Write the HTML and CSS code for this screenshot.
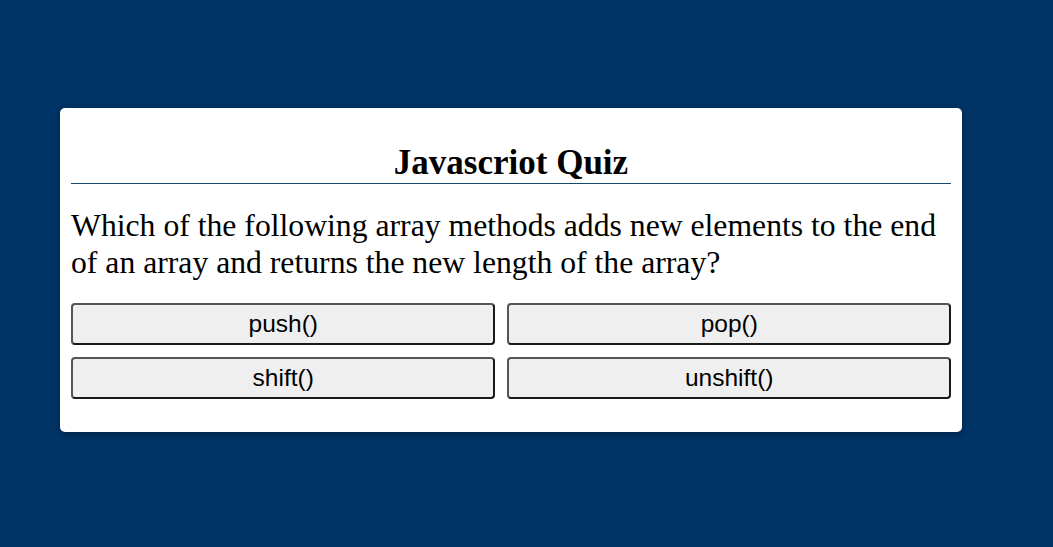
FILE: index.html
```html
<!DOCTYPE html>
<html>
<head>
<meta charset="utf-8">
<link rel="stylesheet" href="styles.css">
</head>
<body>
<div class="card">
  <h1 class="title">Javascriot Quiz</h1>
  <p class="question">Which of the following array methods adds new elements to the end of an array and returns the new length of the array?</p>
  <div class="answers">
    <button class="btn">push()</button>
    <button class="btn">pop()</button>
    <button class="btn">shift()</button>
    <button class="btn">unshift()</button>
  </div>
</div>
</body>
</html>
```

FILE: styles.css
```css
html, body {
  margin: 0;
  padding: 0;
  background: #003366;
  height: 100%;
}
body {
  font-family: "Liberation Serif", "Times New Roman", serif;
  padding-top: 108px;
  padding-left: 60px;
  box-sizing: border-box;
}
.card {
  width: 902px;
  height: 324px;
  box-sizing: border-box;
  background: #fff;
  border-radius: 5px;
  padding: 10px 11px;
  box-shadow: 0 2px 6px rgba(0,0,0,0.3);
}
.title {
  font-size: 35px;
  font-weight: bold;
  text-align: center;
  margin: 25px 0 0;
  line-height: 40px;
  padding-bottom: 0;
  border-bottom: 1px solid #16496b;
  color: #000;
}
.question {
  font-size: 31.7px;
  line-height: 37px;
  margin: 23px 0 22px;
  color: #000;
}
.answers {
  display: grid;
  grid-template-columns: auto auto;
  column-gap: 12px;
  row-gap: 12px;
}
.btn {
  font-family: "Liberation Sans", Arial, sans-serif;
  font-size: 24.5px;
  height: 42px;
  background: #efefef;
  border: 2px solid #1a1a1a;
  border-top-color: #555;
  border-left-color: #555;
  border-radius: 4px;
  color: #000;
  padding: 0 10px;
}
```
